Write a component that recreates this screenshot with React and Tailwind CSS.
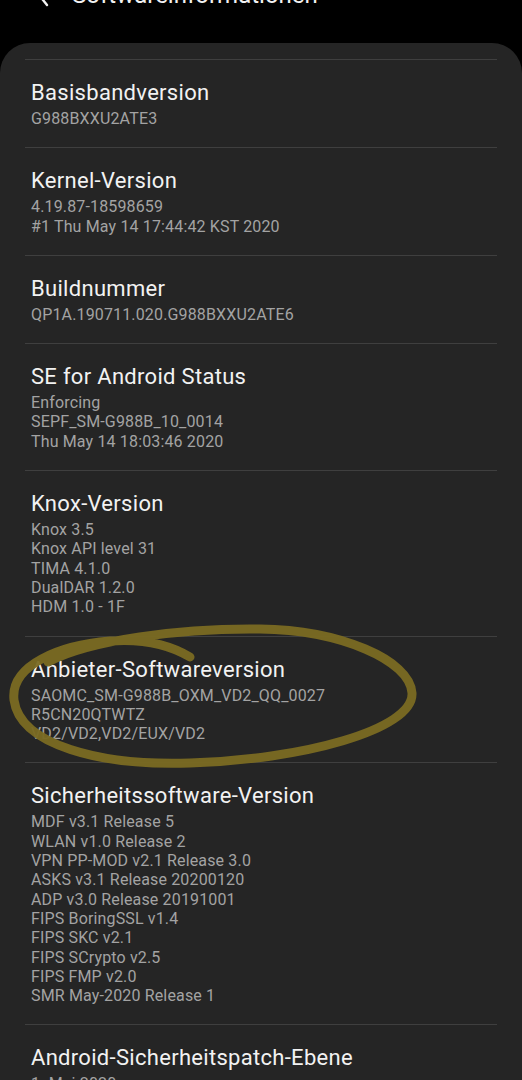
import React from "react";

const sections = [
  { title: "Basisbandversion", lines: ["G988BXXU2ATE3"] },
  { title: "Kernel-Version", lines: ["4.19.87-18598659", "#1 Thu May 14 17:44:42 KST 2020"] },
  { title: "Buildnummer", lines: ["QP1A.190711.020.G988BXXU2ATE6"] },
  { title: "SE for Android Status", lines: ["Enforcing", "SEPF_SM-G988B_10_0014", "Thu May 14 18:03:46 2020"] },
  { title: "Knox-Version", lines: ["Knox 3.5", "Knox API level 31", "TIMA 4.1.0", "DualDAR 1.2.0", "HDM 1.0 - 1F"] },
  { title: "Anbieter-Softwareversion", lines: ["SAOMC_SM-G988B_OXM_VD2_QQ_0027", "R5CN20QTWTZ", "VD2/VD2,VD2/EUX/VD2"] },
  {
    title: "Sicherheitssoftware-Version",
    lines: [
      "MDF v3.1 Release 5",
      "WLAN v1.0 Release 2",
      "VPN PP-MOD v2.1 Release 3.0",
      "ASKS v3.1 Release 20200120",
      "ADP v3.0 Release 20191001",
      "FIPS BoringSSL v1.4",
      "FIPS SKC v2.1",
      "FIPS SCrypto v2.5",
      "FIPS FMP v2.0",
      "SMR May-2020 Release 1",
    ],
  },
  { title: "Android-Sicherheitspatch-Ebene", lines: ["1. Mai 2020"] },
];

export default function App() {
  return (
    <div
      className="relative h-[1080px] w-[522px] overflow-hidden bg-black"
      style={{ fontFamily: "Roboto, 'Noto Sans', sans-serif" }}
    >
      {/* Header (mostly scrolled off) */}
      <div className="flex h-[43px] flex-col">
        <div className="mt-[-19px] flex items-center">
          <svg className="ml-[36px] h-[24px] w-[14px]" viewBox="0 0 14 24" fill="none">
            <path d="M11 2 L3 12 L11 22" stroke="#f2f2f2" strokeWidth="2.4" strokeLinecap="round" strokeLinejoin="round" />
          </svg>
          <span className="ml-[22px] text-[24px] leading-[28px] text-[#f2f2f2]">Softwareinformationen</span>
        </div>
      </div>

      {/* Card */}
      <div className="rounded-t-[30px] bg-[#252525] pt-[16px]">
        {sections.map((s) => (
          <div key={s.title}>
            <div className="mx-[25px] h-px bg-[#3f3f3f]" />
            <div className="px-[31px] pt-[20px] pb-[19px]">
              <div className="text-[22px] leading-[26px] tracking-[0.3px] text-[#f2f2f2]">{s.title}</div>
              <div className="mt-[3px]">
                {s.lines.map((l, i) => (
                  <div key={i} className="text-[16px] leading-[19.3px] tracking-[0.15px] text-[#a3a3a3]">
                    {l}
                  </div>
                ))}
              </div>
            </div>
          </div>
        ))}
      </div>

      {/* Hand-drawn annotation */}
      <svg className="pointer-events-none absolute left-0 top-0" width="522" height="1080" viewBox="0 0 522 1080" fill="none">
        <path
          d="M48 662 C 90 640, 180 628, 260 629 C 340 630, 410 660, 412 693 C 414 730, 300 760, 190 763 C 100 766, 20 745, 14 700 C 10 665, 60 645, 110 641 C 150 638, 175 648, 190 657"
          stroke="#7a6a22"
          strokeWidth="9"
          strokeLinecap="round"
          strokeLinejoin="round"
          opacity="0.95"
        />
      </svg>
    </div>
  );
}
